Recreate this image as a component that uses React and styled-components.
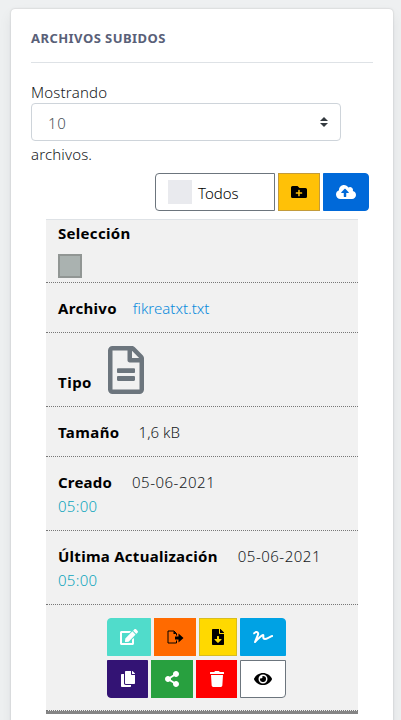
import React from "react";
import styled, { createGlobalStyle } from "styled-components";
import {
  FaFolderPlus,
  FaCloudUploadAlt,
  FaRegFileAlt,
  FaEdit,
  FaFileDownload,
  FaSignature,
  FaCopy,
  FaShareAlt,
  FaTrash,
  FaEye,
} from "react-icons/fa";

const GlobalStyle = createGlobalStyle`
  *, *::before, *::after { box-sizing: border-box; }
  body {
    margin: 0;
    background: #eef0f1;
    color: #16191c;
    font: 300 15px/24px "Noto Sans", "Open Sans", sans-serif;
    overflow: hidden;
  }
`;

const Page = styled.main`
  height: 720px;
  padding: 9px 8px 0 11px;
  overflow: hidden;
`;

const Card = styled.section`
  height: 740px;
  padding: 17px 20px 0;
  background: #fff;
  border-radius: 4px;
  box-shadow: 0 0 2px rgba(0, 0, 0, 0.22), 0 6px 14px rgba(8, 10, 37, 0.07);
`;

const Title = styled.h5`
  margin: 0;
  height: 37px;
  border-bottom: 1px solid #dee2e6;
  color: #596078;
  font-size: 13px;
  font-weight: 700;
  line-height: 24px;
`;

const Text = styled.span`
  display: inline-block;
  white-space: nowrap;
  letter-spacing: ${(p) => p.$track || 0}px;
`;

const Length = styled.div`
  display: flex;
  flex-direction: column;
  align-items: flex-start;
  padding-top: 17px;
`;

const Select = styled.div`
  display: flex;
  align-items: center;
  justify-content: space-between;
  width: 310px;
  height: 38px;
  margin: -1px 0 1px;
  padding: 1px 12px 0 16px;
  border: 1px solid #ced4da;
  border-radius: 4px;
  color: #495057;

  svg {
    margin-top: -1px;
  }
`;

const Toolbar = styled.div`
  display: flex;
  justify-content: flex-end;
  gap: 3px;
  margin: 7px 4px 8px 0;
`;

const Button = styled.button`
  display: flex;
  align-items: center;
  justify-content: center;
  width: ${(p) => p.$width}px;
  height: 38px;
  padding: 0;
  border: 1px solid ${(p) => p.$border || p.$bg};
  border-radius: ${(p) => p.$radius || 0};
  background: ${(p) => p.$bg};
  color: ${(p) => p.$color || "#000"};
  font: inherit;
`;

const AllButton = styled(Button)`
  justify-content: flex-start;
  gap: 6px;
  padding-left: 12px;

  ${Text} {
    padding-top: 2px;
  }
`;

const Swatch = styled.span`
  width: 24px;
  height: 24px;
  background: #e9eaee;
`;

const List = styled.div`
  width: 312px;
  margin-left: 15px;
  background: #f1f1f1;
  border-top: 1px solid #dee2e6;
  border-bottom: 3px solid #858585;
`;

const Row = styled.div`
  height: ${(p) => p.$height}px;
  padding: ${(p) => (p.$top === undefined ? 13 : p.$top)}px 12px 0;
  border-bottom: 1px dotted #777;
`;

const Line = styled.div`
  display: flex;
  align-items: center;
  gap: ${(p) => p.$gap || 0}px;
`;

const Label = styled(Text)`
  color: #000;
  font-weight: 700;
`;

const IconLine = styled(Line)`
  align-items: flex-end;

  svg {
    margin-bottom: 2px;
  }

  ${Label} {
    margin-bottom: 2px;
  }
`;

const Link = styled(Text).attrs({ as: "a" })`
  color: #0a8bdc;
`;

const Time = styled(Text)`
  color: #0ca5bc;
`;

const Checkbox = styled.div`
  width: 24px;
  height: 24px;
  margin-top: 9px;
  border: 2px solid #919694;
  background: #aab2b0;
`;

const Actions = styled.div`
  display: flex;
  flex-direction: column;
  align-items: flex-start;
  gap: 4px;
  height: 106px;
  padding: 13px 0 0 61px;
  border-bottom: 1px dotted #777;
`;

const ActionGroup = styled.div`
  display: flex;
  gap: 3px;
`;

const FileExportIcon = () => (
  <svg width="17" height="16" viewBox="0 0 17 16" fill="none">
    <path d="M9.500 11.500v2.500h-8.500v-12h6l2.500 2.500v2" stroke="#000" />
    <path d="M6.500 2v3h3z" fill="#000" />
    <path d="M8 7.500h3.500V4.500l5 4.500-5 4.500v-3H8z" fill="#000" />
  </svg>
);

const SortIcon = () => (
  <svg width="8" height="10" viewBox="0 0 4 5">
    <path fill="#343a40" d="M2 0L0 2h4zm0 5L0 3h4z" />
  </svg>
);

export default function App() {
  return (
    <>
      <GlobalStyle />
      <Page>
        <Card>
          <Title>
            <Text $track={0.45}>ARCHIVOS SUBIDOS</Text>
          </Title>
          <Length>
            <Text $track={0.2}>Mostrando</Text>
            <Select>
              <Text $track={0.8}>10</Text>
              <SortIcon />
            </Select>
            <Text $track={0.15}>archivos.</Text>
          </Length>
          <Toolbar>
            <AllButton $width={120} $bg="#fff" $border="#6c757d" $radius="4px 0 0 4px">
              <Swatch />
              <Text>Todos</Text>
            </AllButton>
            <Button $width={42} $bg="#ffc107" $border="#c39b3b">
              <FaFolderPlus size={16} />
            </Button>
            <Button $width={46} $bg="#0069d9" $color="#fff" $radius="0 4px 4px 0">
              <FaCloudUploadAlt size={20} />
            </Button>
          </Toolbar>
          <List>
            <Row $height={63} $top={1}>
              <Label $track={0.3}>Selección</Label>
              <Checkbox />
            </Row>
            <Row $height={50}>
              <Line $gap={16}>
                <Label $track={0.3}>Archivo</Label>
                <Link>fikreatxt.txt</Link>
              </Line>
            </Row>
            <Row $height={74}>
              <IconLine $gap={10}>
                <Label $track={0.5}>Tipo</Label>
                <FaRegFileAlt size={48} color="#6c757d" />
              </IconLine>
            </Row>
            <Row $height={50}>
              <Line $gap={19}>
                <Label $track={0.4}>Tamaño</Label>
                <Text>1,6 kB</Text>
              </Line>
            </Row>
            <Row $height={74}>
              <Line $gap={20}>
                <Label $track={0.2}>Creado</Label>
                <Text $track={0.5}>05-06-2021</Text>
              </Line>
              <Time $track={0.3}>05:00</Time>
            </Row>
            <Row $height={74}>
              <Line $gap={20}>
                <Label $track={0.27}>Última Actualización</Label>
                <Text $track={0.5}>05-06-2021</Text>
              </Line>
              <Time $track={0.3}>05:00</Time>
            </Row>
            <Actions>
              <ActionGroup>
                <Button $width={44} $bg="#50dccb" $color="#fff" $radius="4px 0 0 0">
                  <FaEdit size={18} />
                </Button>
                <Button $width={42} $bg="#ff6a00">
                  <FileExportIcon />
                </Button>
                <Button $width={38} $bg="#ffd900" $border="#d8bd20">
                  <FaFileDownload size={16} />
                </Button>
                <Button $width={46} $bg="#00a2e4" $color="#fff" $radius="0 4px 0 0">
                  <FaSignature size={20} />
                </Button>
              </ActionGroup>
              <ActionGroup>
                <Button $width={41} $bg="#331374" $color="#fff" $radius="0 0 0 4px">
                  <FaCopy size={16} />
                </Button>
                <Button $width={42} $bg="#28a03f" $color="#fff">
                  <FaShareAlt size={16} />
                </Button>
                <Button $width={41} $bg="#ff0000" $color="#fff">
                  <FaTrash size={16} />
                </Button>
                <Button $width={46} $bg="#fff" $border="#6c757d" $radius="0 0 4px 0">
                  <FaEye size={18} />
                </Button>
              </ActionGroup>
            </Actions>
          </List>
        </Card>
      </Page>
    </>
  );
}
